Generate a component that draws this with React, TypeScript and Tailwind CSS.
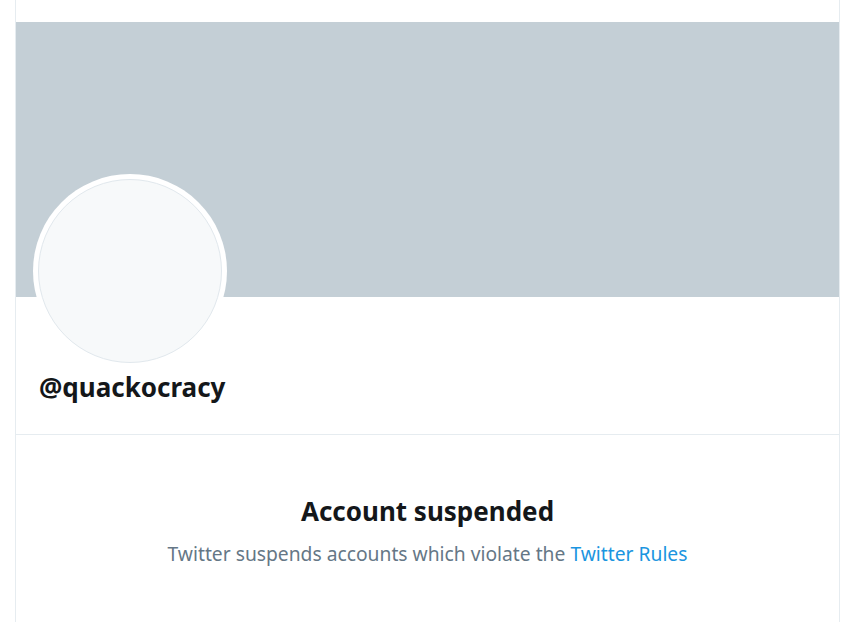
export default function App() {
  return (
    <div className="min-h-[622px] bg-white" style={{ fontFamily: '"Noto Sans", "Open Sans", sans-serif' }}>
      <div className="ml-[15px] w-[825px] min-h-[622px] border-x border-[#e6ecf0] flex flex-col">
        {/* Top gap */}
        <div className="h-[22px]" />

        {/* Header banner */}
        <div className="h-[275px] bg-[#c4cfd6]" />

        {/* Profile */}
        <div className="border-b border-[#e6ecf0] pb-[30px]">
          <div className="-mt-[123px] ml-[17px] w-[194px] h-[194px] rounded-full bg-white p-[5px]">
            <div className="w-full h-full rounded-full bg-[#f7f9fa] border border-[#e1e8ed]" />
          </div>
          <div className="pl-[23px] pt-[2px] text-[26px] leading-[34px] font-bold text-[#14171a]">
            @quackocracy
          </div>
        </div>

        {/* Suspended notice */}
        <div className="flex flex-col items-center pt-[58px]">
          <h2 className="text-[26px] leading-[36px] font-bold text-[#14171a]">Account suspended</h2>
          <p className="mt-[11px] text-[19.25px] leading-[28px] text-[#657786]">
            Twitter suspends accounts which violate the{" "}
            <a href="#" className="text-[#1b95e0]">Twitter Rules</a>
          </p>
        </div>
      </div>
    </div>
  );
}
